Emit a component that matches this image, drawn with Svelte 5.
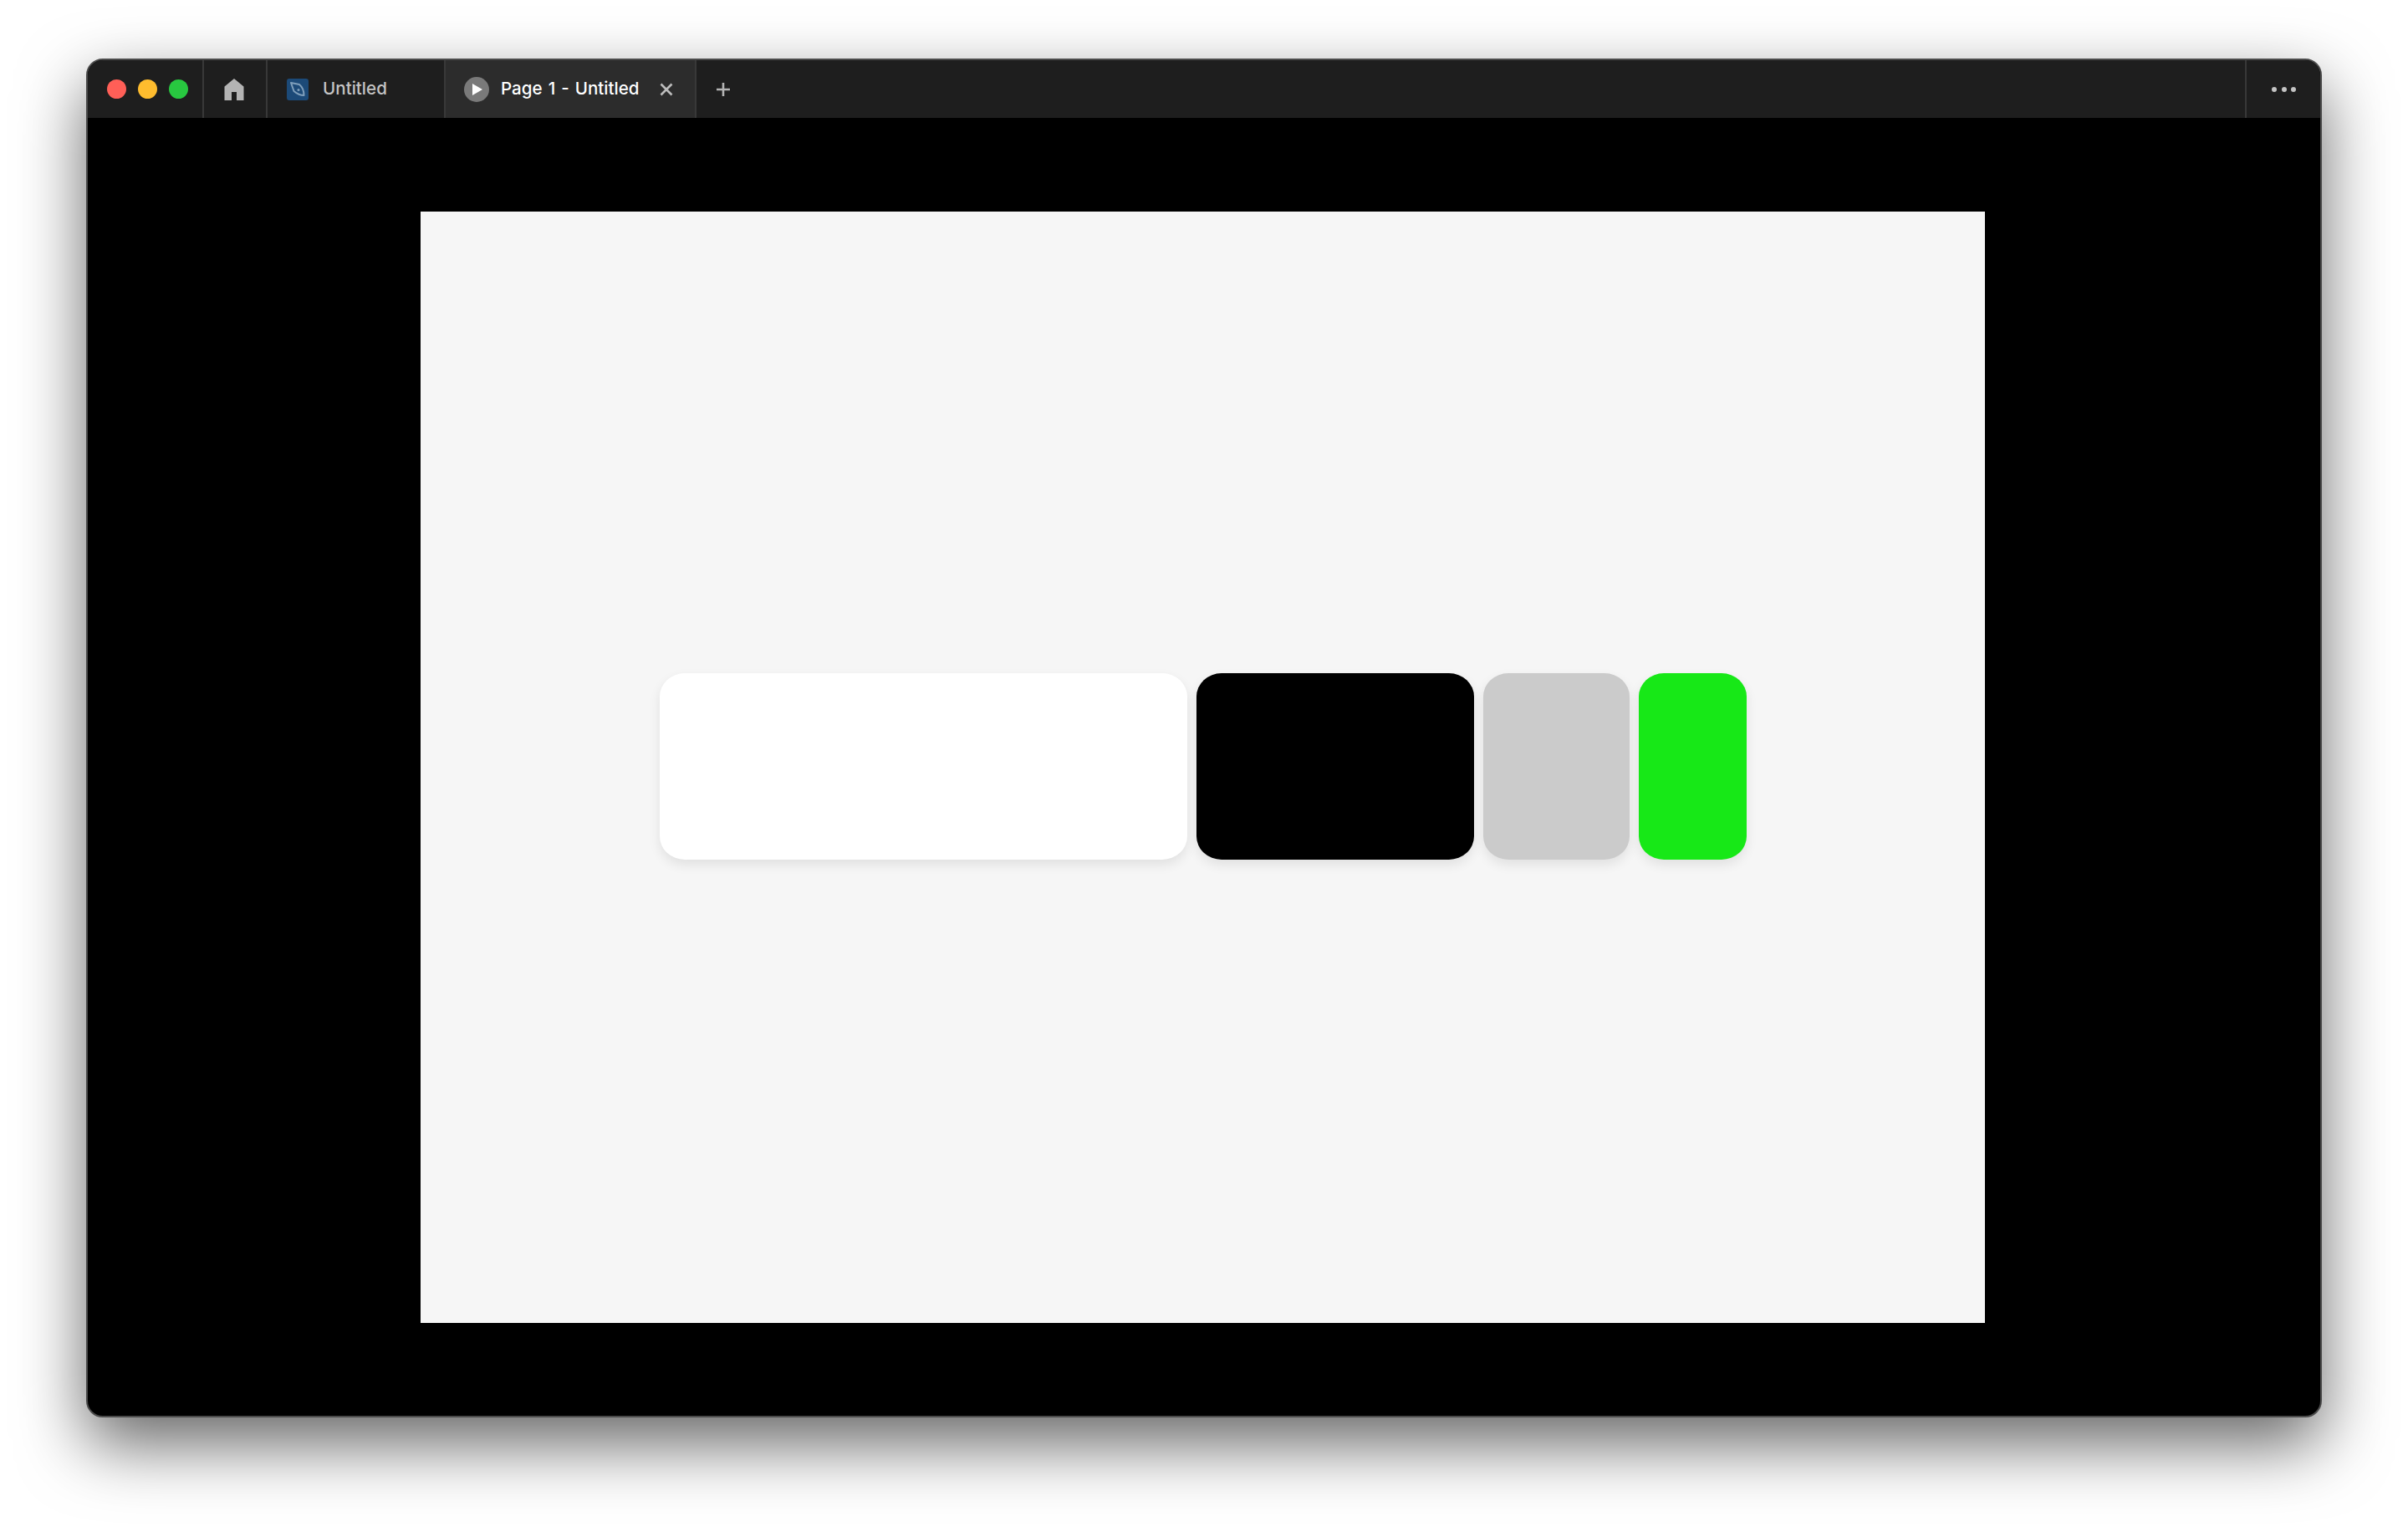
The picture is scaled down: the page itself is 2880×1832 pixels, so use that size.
<script>
  const cards = [
    { name: 'white', width: 631 },
    { name: 'black', width: 332 },
    { name: 'gray', width: 175 },
    { name: 'green', width: 129 }
  ];
</script>

<div class="page">
  <div class="window">
    <header class="titlebar">
      <div class="lights">
        <span class="light red"></span>
        <span class="light yellow"></span>
        <span class="light green"></span>
      </div>
      <div class="home">
        <svg width="24" height="26" viewBox="0 0 24 26"><path fill="#b4b4b4" d="M12 0 L23.5 9.5 V26 H15 V16 H9 V26 H.5 V9.5 Z"/></svg>
      </div>
      <div class="tab">
        <span class="file-icon">
          <svg width="26" height="26" viewBox="0 0 26 26">
            <rect width="26" height="26" rx="3" fill="#1c4a78"/>
            <path d="M5 5 L15 7 C18 9.5 20.5 13 20.5 20 C16 20 12 18 8.5 15 Z" fill="none" stroke="#7f9fbb" stroke-width="2" stroke-linejoin="round"/>
            <circle cx="14" cy="13.5" r="1.5" fill="#7f9fbb"/>
          </svg>
        </span>
        <span class="tab-label">Untitled</span>
      </div>
      <div class="tab active">
        <span class="play">
          <svg width="14" height="16" viewBox="0 0 14 16"><path fill="#fff" d="M1 1 L13 8 L1 15 Z"/></svg>
        </span>
        <span class="tab-label">Page 1 - Untitled</span>
        <svg class="close" width="16" height="16" viewBox="0 0 16 16"><path d="M1.5 1.5 L14.5 14.5 M14.5 1.5 L1.5 14.5" stroke="#bdbdbd" stroke-width="2.6" fill="none"/></svg>
      </div>
      <div class="plus">
        <svg width="18" height="18" viewBox="0 0 18 18"><path d="M9 1 V17 M1 9 H17" stroke="#b4b4b4" stroke-width="2.6" fill="none"/></svg>
      </div>
      <div class="more">
        <span></span><span></span><span></span>
      </div>
    </header>
    <main class="stage">
      <div class="canvas">
        {#each cards as card}
          <div class="card {card.name}" style="width: {card.width}px"></div>
        {/each}
      </div>
    </main>
  </div>
</div>

<style>
  :global(body) {
    background: #fff;
  }
  .page {
    box-sizing: border-box;
    width: 2880px;
    height: 1832px;
    padding: 70px 103px 137px;
    overflow: hidden;
  }
  .window {
    box-sizing: border-box;
    height: 1625px;
    display: flex;
    flex-direction: column;
    border: 2px solid #4a4a4a;
    border-radius: 20px;
    overflow: hidden;
    background: #000;
    box-shadow: 0 32px 80px rgba(0, 0, 0, 0.6);
  }
  .titlebar {
    height: 69px;
    flex: none;
    display: flex;
    align-items: stretch;
    background: #1e1e1e;
    font-family: Inter, "Liberation Sans", sans-serif;
    font-size: 20.6px;
    font-weight: 500;
    word-spacing: 1.5px;
  }
  .tab-label {
    position: relative;
    top: -1px;
  }
  .lights {
    width: 139px;
    box-sizing: border-box;
    padding-left: 23px;
    display: flex;
    align-items: center;
    gap: 14px;
    border-right: 2px solid #383838;
  }
  .light {
    width: 23px;
    height: 23px;
    border-radius: 50%;
  }
  .red { background: #ff5f57; }
  .yellow { background: #febc2e; }
  .light.green { background: #28c840; }
  .home {
    width: 76px;
    box-sizing: border-box;
    padding-right: 2px;
    display: flex;
    align-items: center;
    justify-content: center;
    border-right: 2px solid #383838;
  }
  .tab {
    width: 211px;
    box-sizing: border-box;
    padding-left: 23px;
    display: flex;
    align-items: center;
    color: #c4c4c4;
  }
  .file-icon {
    display: flex;
    margin-right: 17px;
  }
  .tab.active {
    width: 302px;
    padding-left: 22px;
    background: #2c2c2c;
    border-left: 2px solid #383838;
    border-right: 2px solid #383838;
    color: #fff;
  }
  .play {
    width: 30px;
    height: 30px;
    border-radius: 50%;
    background: #7a7a7a;
    display: flex;
    align-items: center;
    justify-content: center;
    margin-right: 14px;
    padding-left: 2px;
    box-sizing: border-box;
  }
  .close {
    margin-left: 24px;
  }
  .plus {
    width: 64px;
    display: flex;
    align-items: center;
    justify-content: center;
  }
  .more {
    margin-left: auto;
    width: 90px;
    box-sizing: border-box;
    padding-left: 30px;
    display: flex;
    align-items: center;
    gap: 5.5px;
    border-left: 2px solid #383838;
  }
  .more span {
    width: 6px;
    height: 6px;
    border-radius: 50%;
    background: #c4c4c4;
  }
  .stage {
    flex: 1;
    display: flex;
    justify-content: center;
    align-items: center;
    padding: 1px 3px 0 0;
  }
  .canvas {
    box-sizing: border-box;
    width: 1871px;
    height: 1329px;
    background: #f6f6f6;
    padding: 0 0 2px 286px;
    display: flex;
    align-items: center;
    gap: 11px;
  }
  .card {
    height: 223px;
    border-radius: 30px / 28px;
    box-shadow: 0 6px 14px rgba(0, 0, 0, 0.09);
    flex: none;
  }
  .card.white { background: #fff; }
  .card.black { background: #000; }
  .card.gray { background: #cbcbcb; }
  .card.green { background: #17e817; }
</style>
